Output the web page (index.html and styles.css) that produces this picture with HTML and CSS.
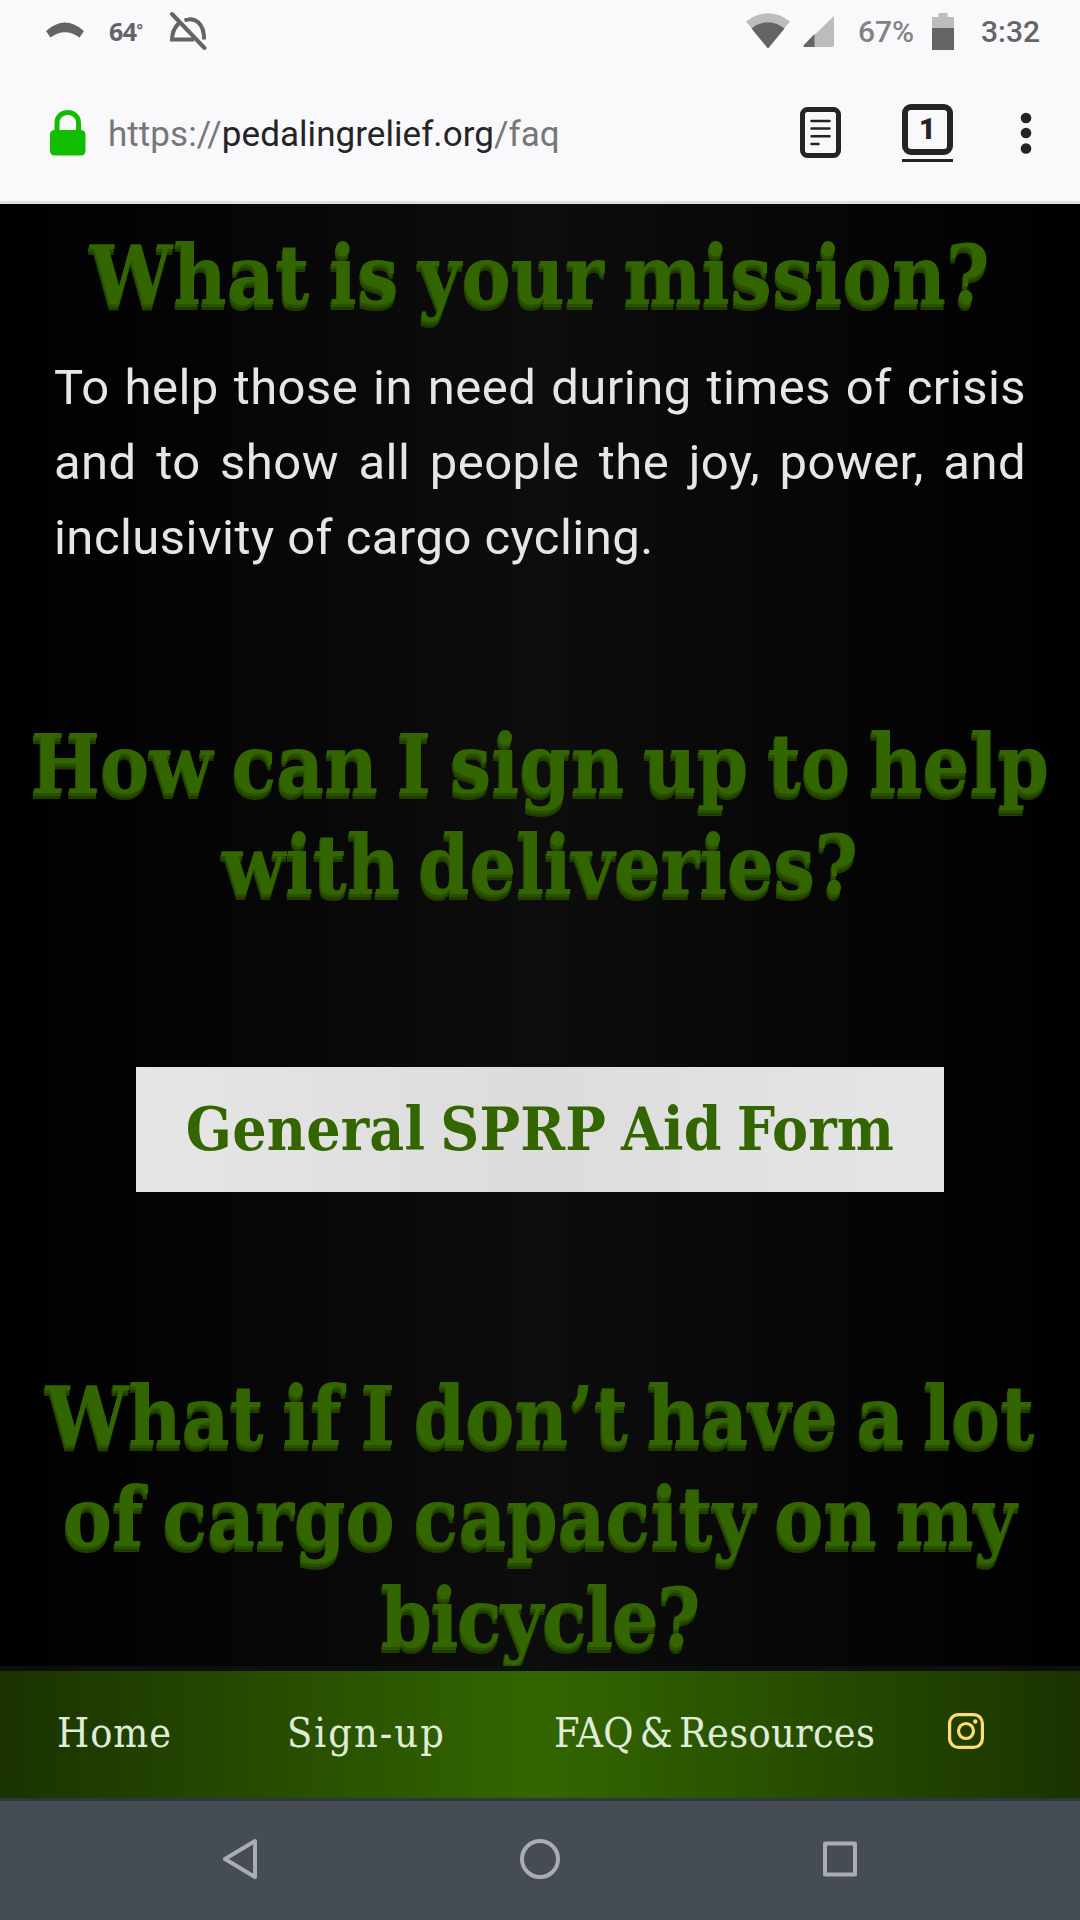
FILE: index.html
```html
<!DOCTYPE html>
<html lang="en">
<head>
  <meta charset="UTF-8">
  <meta name="viewport" content="width=device-width, initial-scale=1.0">
  <title>FAQ & Resources</title>
  <link rel="stylesheet" href="styles.css">
</head>
<body>
  <header class="browser">
    <div class="status-bar">
      <div class="status-left">
        <svg class="icon-call" width="40" height="20" viewBox="0 0 40 20">
          <path d="M1 10Q20-7 39 10L34.5 16.5Q20 6 5.5 16.5Z" fill="#646466"/>
        </svg>
        <span class="temp">64<span class="degree">°</span></span>
        <svg class="icon-silent" width="38" height="40" viewBox="0 0 38 40" fill="none" stroke="#646466" stroke-width="4">
          <path d="M10 12Q3 19 3 28.5H25M15.500 9.500C26 5 35.500 13 35 28.500"/>
          <path d="M3 3L35.500 37" stroke-linecap="round"/>
        </svg>
      </div>
      <div class="status-right">
        <svg class="icon-wifi" width="46" height="36" viewBox="0 0 46 36">
          <path d="M1 8.500Q23-8 45 8.500L23 35.500Z" fill="#bcbcbe"/>
          <path d="M6.500 15.500Q23 3 39.500 15.500L23 35.500Z" fill="#646466"/>
        </svg>
        <svg class="icon-signal" width="31" height="31" viewBox="0 0 31 31">
          <path d="M31 0V29Q31 31 29 31H1Q0 31 1 29Z" fill="#bcbcbe"/>
          <path d="M11.500 18V31H1Q0 31 1 29Z" fill="#646466"/>
        </svg>
        <span class="percent">67%</span>
        <svg class="icon-battery" width="22" height="37" viewBox="0 0 22 37">
          <path d="M6.500 0H15.500V4H22V15H0V4H6.500Z" fill="#bcbcbe"/>
          <path d="M0 15H22V37H0Z" fill="#646466"/>
        </svg>
        <span class="time">3:32</span>
      </div>
    </div>

    <div class="url-bar">
      <svg class="icon-lock" width="36" height="46" viewBox="0 0 36 46">
        <path d="M7 24V13C7-1 28.500-1 28.500 13V24" fill="none" stroke="#12bc00" stroke-width="5"/>
        <rect x="0" y="20" width="35.500" height="25.500" rx="4.500" fill="#12bc00"/>
      </svg>
      <div class="url">https://<span class="domain">pedalingrelief.org</span>/faq</div>
      <svg class="icon-reader" width="41" height="51" viewBox="0 0 41 51" fill="none" stroke="#242427">
        <rect x="2.500" y="2.500" width="36" height="46" rx="5" stroke-width="5"/>
        <path d="M11.500 14H29.500M11.500 21.500H29.500M11.500 29.200H29.500M11.500 37H18.500" stroke-width="2.500" stroke-linecap="round"/>
      </svg>
      <div class="tabs"><span class="tab-count">1</span></div>
      <svg class="icon-menu" width="12" height="44" viewBox="0 0 12 44" fill="#242427">
        <circle cx="6" cy="7" r="5.300"/>
        <circle cx="6" cy="22" r="5.300"/>
        <circle cx="6" cy="37.500" r="5.300"/>
      </svg>
    </div>
  </header>

  <main class="content">
    <h1><span class="line-1">What is your mission?</span></h1>
    <p>To help those in need during times of crisis and to show all people the joy, power, and inclusivity of cargo cycling.</p>

    <h1 class="signup">How can I sign up to help<br><span class="line-3">with deliveries?</span></h1>
    <a class="button" href="#">General SPRP Aid Form</a>

    <h1 class="capacity">What if I don’t have a lot<br>of cargo capacity on my<br><span class="line-6">bicycle?</span></h1>
  </main>

  <nav class="site-nav">
    <a class="home" href="#">Home</a>
    <a class="sign-up" href="#">Sign-up</a>
    <a class="faq" href="#">FAQ &amp; Resources</a>
    <a class="instagram" href="#">
      <svg width="36" height="36" viewBox="0 0 36 36" fill="none" stroke="#ffdc73" stroke-width="3.200">
        <rect x="1.600" y="1.600" width="32.800" height="32.800" rx="9"/>
        <circle cx="18" cy="18" r="7.500"/>
        <circle cx="27.300" cy="8.500" r="2.200" fill="#ffdc73" stroke="none"/>
      </svg>
    </a>
  </nav>

  <footer class="system-nav">
    <svg width="40" height="44" viewBox="0 0 40 44" fill="none" stroke="#a9adb1" stroke-width="4" stroke-linejoin="round">
      <path d="M5 22L35 4V40Z"/>
    </svg>
    <svg width="40" height="44" viewBox="0 0 40 44" fill="none" stroke="#a9adb1" stroke-width="4">
      <circle cx="20" cy="22" r="18"/>
    </svg>
    <svg width="40" height="44" viewBox="0 0 40 44" fill="none" stroke="#a9adb1" stroke-width="4" stroke-linejoin="round">
      <rect x="5" y="6.500" width="30" height="31"/>
    </svg>
  </footer>
</body>
</html>
```
FILE: styles.css
```css
* {
  box-sizing: border-box;
}
body {
  margin: 0;
  width: 1080px;
  height: 1920px;
  display: flex;
  flex-direction: column;
  overflow: hidden;
  background: #000;
  font-family: Roboto, sans-serif;
}
svg {
  display: block;
  flex: none;
}
a {
  text-decoration: none;
}

/* browser chrome */
.browser {
  height: 204px;
  flex: none;
  background: #f9f9fb;
  border-bottom: 3px solid #e0e0e1;
}
.status-bar {
  height: 62px;
  display: flex;
  justify-content: space-between;
  align-items: center;
  padding: 0 40px 0 45px;
  color: #646466;
}
.status-left, .status-right {
  display: flex;
  align-items: center;
}
.temp {
  margin: 0 24px 0 24px;
  width: 36px;
  font: bold 25px "Open Sans", sans-serif;
  letter-spacing: -0.5px;
  white-space: nowrap;
}
.degree {
  font-size: 15px;
  vertical-align: 6px;
}
.icon-signal {
  margin-left: 12px;
}
.percent {
  margin-left: 24px;
  width: 56px;
  font-size: 30px;
  font-weight: 500;
  color: #838385;
}
.icon-battery {
  margin-left: 18px;
}
.time {
  margin-left: 27px;
  font-size: 30px;
  font-weight: 500;
}
.url-bar {
  height: 141px;
  display: flex;
  align-items: center;
  padding: 0 48px 0 50px;
}
.url {
  width: 460px;
  margin-left: 22px;
  padding-top: 3px;
  font-size: 35px;
  letter-spacing: 0.05px;
  color: #77777a;
}
.domain {
  color: #242427;
}
.icon-reader {
  margin-left: 232px;
}
.tabs {
  width: 51px;
  height: 58px;
  margin-left: 61px;
  border-bottom: 3px solid #242427;
  padding-bottom: 4px;
}
.tab-count {
  display: block;
  height: 51px;
  border: 6px solid #242427;
  border-radius: 9px;
  font-size: 29px;
  font-weight: 900;
  line-height: 39px;
  text-align: center;
  color: #242427;
}
.icon-menu {
  margin-left: 67px;
}

/* page */
.content {
  height: 1462px;
  flex: none;
  overflow: hidden;
  padding-top: 21px;
  background: linear-gradient(90deg, #000, #0d0d0d, #000);
}
h1 {
  margin: 0;
  font: bold 82px/101px "DejaVu Serif Condensed", serif;
  word-spacing: -7px;
  text-align: center;
  white-space: nowrap;
  color: #336600;
  text-shadow: -1px 3px #285000, -1px 6px #1f3d00;
}
.line-1 {
  letter-spacing: 0.4px;
}
.line-3 {
  letter-spacing: -0.3px;
}
.line-6 {
  letter-spacing: -1.5px;
}
p {
  margin: 24px 54px 0;
  font-size: 49px;
  line-height: 75px;
  letter-spacing: 0.45px;
  text-align: justify;
  color: #e6e6e6;
}
.signup {
  margin-top: 139px;
}
.button {
  display: block;
  width: 808px;
  height: 125px;
  margin: 151px auto 0;
  background: linear-gradient(90deg, #e6e6e6, #dcdcdc, #e6e6e6);
  font: bold 60px/125px "DejaVu Serif Condensed", serif;
  letter-spacing: 0.2px;
  word-spacing: -4px;
  text-align: center;
  color: #336600;
}
.capacity {
  margin-top: 174px;
}

/* site menu */
.site-nav {
  height: 135px;
  flex: none;
  display: flex;
  align-items: center;
  padding: 0 0 3px 57px;
  border-top: 5px solid #0d0f0f;
  border-bottom: 3px solid #2c3840;
  background: linear-gradient(90deg, #1a3300, #336600, #1a3300);
  font: 41px/60px "DejaVu Serif Condensed", serif;
  white-space: nowrap;
}
.site-nav a {
  color: #e0ecda;
}
.home {
  width: 230px;
  letter-spacing: 1px;
}
.sign-up {
  width: 267px;
  letter-spacing: 2.1px;
}
.faq {
  width: 394px;
  letter-spacing: 0.3px;
  word-spacing: -6px;
}
.instagram {
  padding-bottom: 4px;
}

/* android buttons */
.system-nav {
  height: 119px;
  flex: none;
  display: flex;
  justify-content: space-between;
  padding: 36px 220px 0;
  background: #454c53;
}
```
